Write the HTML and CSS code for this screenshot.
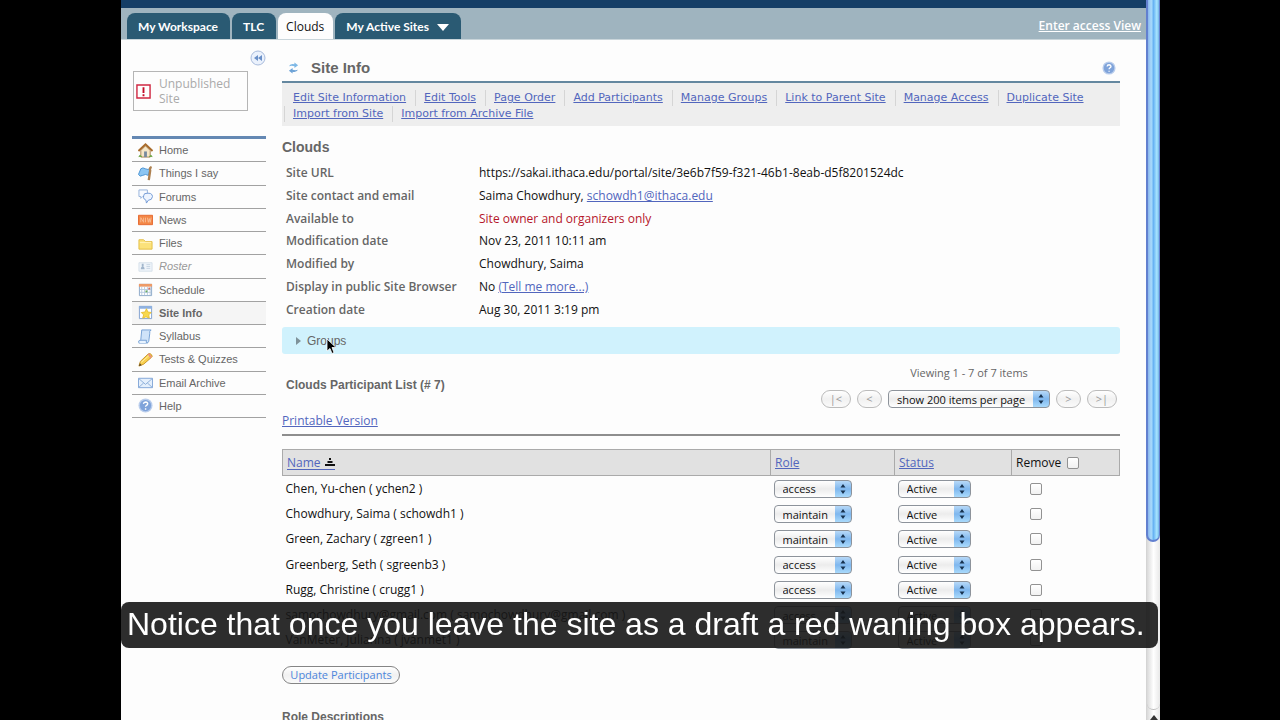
FILE: index.html
```html
<!DOCTYPE html>
<html lang="en">
<head>
<meta charset="utf-8">
<title>Clouds : Site Info</title>
<link rel="stylesheet" href="styles.css">
</head>
<body>
<svg class="sprites" aria-hidden="true">
  <symbol id="updown" viewBox="0 0 8 12"><path d="M4 1 6.500 4.500H1.500zM4 11 6.500 7.500H1.500z" fill="#17324f"/></symbol>
  <symbol id="help" viewBox="0 0 16 16"><circle cx="8" cy="8" r="7.500" fill="#b9cdec"/><circle cx="8" cy="8" r="6" fill="#7fa3da"/><path d="M5.800 6.300Q6 4.300 8.200 4.300 10.300 4.400 10.300 6.200 10.200 7.300 8.900 8 8.100 8.500 8.100 9.400M8.100 11v1.400" fill="none" stroke="#fff" stroke-width="1.500"/></symbol>
</svg>
<div class="window">
  <div class="page">
    <header class="topbar">
      <nav class="tabs">
        <a class="tab" href="#">My Workspace</a>
        <a class="tab" href="#">TLC</a>
        <a class="tab tab-current" href="#">Clouds</a>
        <a class="tab" href="#">My Active Sites <svg class="caret" viewBox="0 0 12 7"><path d="M0 0H12L6 7z" fill="#fff"/></svg></a>
      </nav>
      <a class="view-switch" href="#">Enter access View</a>
    </header>
    <div class="columns">
      <aside class="sidebar">
        <button class="collapse" aria-label="Collapse menu"><svg viewBox="0 0 16 16"><circle cx="8" cy="8" r="7" fill="#eaf1fc" stroke="#a9bcdc"/><path d="M8 5v6L4 8zM12 5v6L8 8z" fill="#6a90c8"/></svg></button>
        <div class="unpublished">
          <svg viewBox="0 0 16 16"><path d="M1 1H15V15H1z" fill="#fff" stroke="#cf2742" stroke-width="1.500"/><path d="M8 3.500v6M8 11v2" stroke="#c40c28" stroke-width="2"/></svg>
          <span>Unpublished Site</span>
        </div>
        <ul class="menu">
          <li><a href="#"><svg viewBox="0 0 16 16"><path d="M3 8V15H13V8L8 3z" fill="#f5e6c6" stroke="#a98252"/><path d="M.500 8.500 8 1.500 15.500 8.500" fill="none" stroke="#a96c2c" stroke-width="2"/><path d="M6.500 9h3v6h-3z" fill="#78899d"/><path d="M1 15q1-4 3 0M12 15q2-4 3 0" fill="#70a84a" stroke="#70a84a"/></svg>Home</a></li>
          <li><a href="#"><svg viewBox="0 0 16 16"><path d="M3 3Q5 1 8 3T13 2L11 10Q8 8 5 10T.500 9z" fill="#8cc6f3" stroke="#4a92d2"/><path d="M14.500 1Q12 2 13 5L11.500 15" fill="none" stroke="#ad8050" stroke-width="2.500"/></svg>Things I say</a></li>
          <li><a href="#"><svg viewBox="0 0 16 16"><path d="M1 1H10V8H5L3 10V8H1z" fill="#f7faff" stroke="#94b2dc"/><path d="M7 5Q15 3 15.500 8 15 12 11 12L9 15 8.500 12Q4 10 7 5z" fill="#edf4ff" stroke="#6f98d4"/></svg>Forums</a></li>
          <li><a href="#"><svg viewBox="0 0 16 16"><path d="M.500 3.500H15.500V13.500H.500z" fill="#f38746" stroke="#e5662e"/><path d="M3 11V6L6 11V6M8 6v5M10 6l1 5 1-4 1 4 1-5" fill="none" stroke="#f9bb93"/></svg>News</a></li>
          <li><a href="#"><svg viewBox="0 0 16 16"><path d="M1 4H6L8 6H15V14H1z" fill="#fbe27b" stroke="#e3bd43"/><path d="M2 7H14" stroke="#fff3b8"/></svg>Files</a></li>
          <li><a class="hidden-tool" href="#"><svg viewBox="0 0 16 16"><path d="M1 4H15V13H1z" fill="#eef4fa" stroke="#d5e0ea"/><path d="M3 11Q3 8 5 8T7 11zM4 5h2v3H4z" fill="#a2b6cc"/><path d="M9 6h4M9 8h4M9 10h4" stroke="#c6d4e2"/></svg>Roster</a></li>
          <li><a href="#"><svg viewBox="0 0 16 16"><path d="M1.500 2.500H14.500V14.500H1.500z" fill="#fff" stroke="#8aa6c6"/><path d="M1 2H15V5H1z" fill="#ee9a66"/><path d="M4 5V14M7 5V14M10 5V14M13 5V14M2 8H14M2 11H14" stroke="#b9cbe0"/><path d="M8 9h2v2H8z" fill="#66a85b"/><path d="M11 6h2v2h-2z" fill="#d76d5b"/></svg>Schedule</a></li>
          <li class="current"><a href="#"><svg viewBox="0 0 16 16"><path d="M1.500 1.500H14.500V14.500H1.500z" fill="#fff" stroke="#7f9fce"/><path d="M1 1H15V4H1z" fill="#8fb1df"/><path d="M9 4 10.500 7.500 14 8 11.500 10.500 12 14 8.500 12.500 5 14 6 10.500 3.500 8 7.500 7.500z" fill="#f8d94d" stroke="#e8bf35"/></svg>Site Info</a></li>
          <li><a href="#"><svg viewBox="0 0 16 16"><path d="M4 1H14Q12 2 12.500 5L11.500 13Q11 15 9 15H1Q3 14 3 11z" fill="#cfe3f9" stroke="#739fd3"/><path d="M1 15Q0 12 2 12H9Q8 15 10 15" fill="#e8f3ff" stroke="#739fd3"/></svg>Syllabus</a></li>
          <li><a href="#"><svg viewBox="0 0 16 16"><path d="M1 15 2.500 10 11 2Q13 1 14.500 3T14 6L6 13z" fill="#f8cf4f" stroke="#c79429"/><path d="M1 15 2 12 4 14z" fill="#584326"/><path d="M11 2 14 6" stroke="#e99081" stroke-width="2"/><path d="M3.500 11 11.500 4" stroke="#fff0a8"/></svg>Tests &amp; Quizzes</a></li>
          <li><a href="#"><svg viewBox="0 0 16 16"><path d="M.500 3.500H15.500V13.500H.500z" fill="#e4effc" stroke="#7fa4d6"/><path d="M1 4 8 10 15 4M1 13 6 8.500M15 13 10 8.500" fill="none" stroke="#8badd9"/></svg>Email Archive</a></li>
          <li><a href="#"><svg><use href="#help"/></svg>Help</a></li>
        </ul>
      </aside>
      <main class="content">
        <div class="title">
          <svg class="refresh" viewBox="0 0 12 14"><path d="M1 5Q3 2 7 3V1L11 4 7 7V5Q4 4 1 5z" fill="#7db8e6"/><path d="M11 9Q9 12 5 11V13L1 10 5 7V9Q8 10 11 9z" fill="#6ca2d6"/></svg>
          <h1>Site Info</h1>
          <a class="help-link" href="#" aria-label="Help"><svg><use href="#help"/></svg></a>
        </div>
        <ul class="actions">
          <li><a href="#">Edit Site Information</a></li>
          <li><a href="#">Edit Tools</a></li>
          <li><a href="#">Page Order</a></li>
          <li><a href="#">Add Participants</a></li>
          <li><a href="#">Manage Groups</a></li>
          <li><a href="#">Link to Parent Site</a></li>
          <li><a href="#">Manage Access</a></li>
          <li><a href="#">Duplicate Site</a></li>
          <li><a href="#">Import from Site</a></li>
          <li><a href="#">Import from Archive File</a></li>
        </ul>
        <h2>Clouds</h2>
        <table class="info">
          <tr><th scope="row">Site URL</th><td>https://sakai.ithaca.edu/portal/site/3e6b7f59-f321-46b1-8eab-d5f8201524dc</td></tr>
          <tr><th scope="row">Site contact and email</th><td>Saima Chowdhury, <a href="#">schowdh1@ithaca.edu</a></td></tr>
          <tr><th scope="row">Available to</th><td class="alert">Site owner and organizers only</td></tr>
          <tr><th scope="row">Modification date</th><td>Nov 23, 2011 10:11 am</td></tr>
          <tr><th scope="row">Modified by</th><td>Chowdhury, Saima</td></tr>
          <tr><th scope="row">Display in public Site Browser</th><td>No <a href="#">(Tell me more...)</a></td></tr>
          <tr><th scope="row">Creation date</th><td>Aug 30, 2011 3:19 pm</td></tr>
        </table>
        <button class="groups"><svg class="disclosure" viewBox="0 0 5 8"><path d="M0 0 5 4 0 8z" fill="#7f9299"/></svg><span>Groups<svg class="pointer" viewBox="0 0 11 17"><path d="M1 1V13L4 10.500 6 15.500 8 14.500 6 9.500H10z" fill="#000" stroke="#fff" stroke-width=".8"/></svg></span></button>
        <div class="list-head">
          <h3>Clouds Participant List (# 7)</h3>
          <div class="pager">
            <p>Viewing 1 - 7 of 7 items</p>
            <div class="pager-row">
              <button class="pill" disabled>|&lt;</button>
              <button class="pill pill-small" disabled>&lt;</button>
              <span class="pick pick-page"><select aria-label="Items per page"><option>show 200 items per page</option></select><svg><use href="#updown"/></svg></span>
              <button class="pill pill-small" disabled>&gt;</button>
              <button class="pill" disabled>&gt;|</button>
            </div>
          </div>
        </div>
        <div class="printable"><a href="#">Printable Version</a></div>
        <table class="people">
          <colgroup><col><col class="col-role"><col class="col-status"><col class="col-remove"></colgroup>
          <thead>
            <tr><th><a class="sorted" href="#">Name <svg viewBox="0 0 10 8"><path d="M4 0h2v2H4zM2.500 3h5v2h-5zM0 6H10V8H0z" fill="#111"/></svg></a></th><th><a href="#">Role</a></th><th><a href="#">Status</a></th><th><label class="remove">Remove <input type="checkbox"></label></th></tr>
          </thead>
          <tbody>
            <tr><td>Chen, Yu-chen ( ychen2 )</td><td><span class="pick pick-role"><select aria-label="Role"><option>access</option><option>maintain</option></select><svg><use href="#updown"/></svg></span></td><td><span class="pick pick-status"><select aria-label="Status"><option>Active</option></select><svg><use href="#updown"/></svg></span></td><td class="check"><input type="checkbox" aria-label="Remove Chen, Yu-chen"></td></tr>
            <tr><td>Chowdhury, Saima ( schowdh1 )</td><td><span class="pick pick-role"><select aria-label="Role"><option>maintain</option><option>access</option></select><svg><use href="#updown"/></svg></span></td><td><span class="pick pick-status"><select aria-label="Status"><option>Active</option></select><svg><use href="#updown"/></svg></span></td><td class="check"><input type="checkbox" aria-label="Remove Chowdhury, Saima"></td></tr>
            <tr><td>Green, Zachary ( zgreen1 )</td><td><span class="pick pick-role"><select aria-label="Role"><option>maintain</option><option>access</option></select><svg><use href="#updown"/></svg></span></td><td><span class="pick pick-status"><select aria-label="Status"><option>Active</option></select><svg><use href="#updown"/></svg></span></td><td class="check"><input type="checkbox" aria-label="Remove Green, Zachary"></td></tr>
            <tr><td>Greenberg, Seth ( sgreenb3 )</td><td><span class="pick pick-role"><select aria-label="Role"><option>access</option><option>maintain</option></select><svg><use href="#updown"/></svg></span></td><td><span class="pick pick-status"><select aria-label="Status"><option>Active</option></select><svg><use href="#updown"/></svg></span></td><td class="check"><input type="checkbox" aria-label="Remove Greenberg, Seth"></td></tr>
            <tr><td>Rugg, Christine ( crugg1 )</td><td><span class="pick pick-role"><select aria-label="Role"><option>access</option><option>maintain</option></select><svg><use href="#updown"/></svg></span></td><td><span class="pick pick-status"><select aria-label="Status"><option>Active</option></select><svg><use href="#updown"/></svg></span></td><td class="check"><input type="checkbox" aria-label="Remove Rugg, Christine"></td></tr>
            <tr><td>samochowdhury@gmail.com ( samochowdhury@gmail.com )</td><td><span class="pick pick-role"><select aria-label="Role"><option>access</option><option>maintain</option></select><svg><use href="#updown"/></svg></span></td><td><span class="pick pick-status"><select aria-label="Status"><option>Active</option></select><svg><use href="#updown"/></svg></span></td><td class="check"><input type="checkbox" aria-label="Remove samochowdhury@gmail.com"></td></tr>
            <tr><td>VanMeter, Julianna ( jvanmet1 )</td><td><span class="pick pick-role"><select aria-label="Role"><option>maintain</option><option>access</option></select><svg><use href="#updown"/></svg></span></td><td><span class="pick pick-status"><select aria-label="Status"><option>Active</option></select><svg><use href="#updown"/></svg></span></td><td class="check"><input type="checkbox" aria-label="Remove VanMeter, Julianna"></td></tr>
          </tbody>
        </table>
        <button class="update">Update Participants</button>
        <h4>Role Descriptions</h4>
      </main>
    </div>
  </div>
  <div class="scrollbar"><div class="thumb"></div><div class="track"></div><div class="scroll-up"><svg viewBox="0 0 8 5"><path d="M4 0 8 5H0z" fill="#333"/></svg></div></div>
</div>
<p class="caption">Notice that once you leave the site as a draft a red waning box appears.</p>
</body>
</html>
```
FILE: styles.css
```css
* { box-sizing: border-box; }
body {
  margin: 0;
  height: 100vh;
  overflow: hidden;
  background: #000;
  color: #111;
  font: 12px/16px "Open Sans", "Noto Sans", sans-serif;
}
h1, h2, h3, h4, p, ul { margin: 0; padding: 0; }
ul { list-style: none; }
button, select, input { font: inherit; margin: 0; }
a { color: #5266bd; }
svg { display: block; flex: none; }
.sprites { position: absolute; width: 0; height: 0; }

.window {
  display: flex;
  height: 100vh;
  margin: 0 120px 0 121px;
  background: #fdfdfd;
}
.page { flex: 1; min-width: 0; overflow: hidden; }

.topbar {
  display: flex;
  align-items: flex-end;
  justify-content: space-between;
  height: 40px;
  padding: 0 5px 0 6px;
  border-top: 8px solid #143e66;
  border-bottom: 1px solid #c9d5da;
  background: #9fb4bf;
}
.tabs { display: flex; gap: 2px; }
.tab {
  display: flex;
  align-items: center;
  gap: 8px;
  height: 26px;
  padding: 6px 12px 4px 11px;
  border-radius: 8px 8px 0 0;
  background: #2a5a73;
  color: #fff;
  font-family: Lato, "Open Sans", sans-serif;
  font-weight: 700;
  text-decoration: none;
}
.tab-current {
  margin-bottom: -1px;
  padding: 6px 9px 4px 8px;
  background: #fdfdfd;
  color: #111;
  font-family: "Open Sans", "Noto Sans", sans-serif;
  font-weight: 400;
}
.caret { width: 12px; height: 7px; }
.view-switch {
  align-self: center;
  color: #fff;
  font-weight: 600;
  padding-top: 4px;
}

.columns { display: flex; }
.sidebar { width: 145px; padding: 10px 0 0 11px; }
.collapse {
  display: block;
  margin-left: auto;
  padding: 0;
  border: 0;
  background: none;
}
.collapse svg { width: 16px; height: 16px; }
.unpublished {
  display: flex;
  align-items: center;
  gap: 8px;
  width: 115px;
  margin: 5px 0 25px 1px;
  padding: 4px 2px;
  border: 1px solid #b5b5b5;
  color: #aaa;
  line-height: 15px;
}
.unpublished svg { width: 15px; height: 15px; }

.menu {
  display: grid;
  grid-auto-rows: 1fr;
  min-height: 282px;
  width: 134px;
  border-top: 3px solid #6488b3;
  font: 11px/14px "Liberation Sans", Arial, sans-serif;
}
.menu li { border-bottom: 1px solid #a2a2a2; display: flex; }
.menu a {
  display: flex;
  align-items: center;
  gap: 6px;
  padding-left: 6px;
  color: #666;
  text-decoration: none;
}
.menu svg { width: 15px; height: 15px; }
.menu .current { background: #f5f5f5; font-weight: 700; }
.menu .hidden-tool { color: #999; font-style: italic; }

.content { flex: 1; min-width: 0; padding: 14px 26px 0 16px; }
.title {
  display: flex;
  align-items: center;
  height: 29px;
  padding: 0 4px 0 6px;
  border-bottom: 2px solid #64879f;
}
h1, h2, h3, h4 { color: #666; font-family: "Liberation Sans", Arial, sans-serif; }
h1 { flex: 1; font-size: 15px; line-height: 20px; }
.refresh { width: 11px; height: 14px; margin-right: 12px; }
.help-link svg { width: 14px; height: 14px; }
.actions {
  display: flex;
  flex-wrap: wrap;
  padding: 7px 16px 4px 2px;
  background: #eee;
  font: 11px/16px "DejaVu Sans", Verdana, sans-serif;
}
.actions li {
  margin: 0 9px 0 0;
  padding-left: 8px;
  border-left: 1px solid #d5d5d5;
}
.actions li:first-child { border-color: transparent; }
h2 { margin: 12px 0 6px; font-size: 14px; line-height: 18px; }

.info {
  height: 159px;
  border-collapse: collapse;
}
.info th {
  width: 193px;
  padding: 0 0 0 4px;
  color: #666;
  font-weight: 600;
  text-align: left;
}
.info td { padding: 0 4px; }
.info .alert { color: #b5162b; }

.groups {
  display: flex;
  align-items: center;
  gap: 6px;
  width: 100%;
  height: 27px;
  margin: 6px 0 11px;
  padding: 0 14px;
  border: 0;
  border-radius: 3px;
  background: #d0f2fd;
  color: #666;
  font: 12px/16px "Liberation Sans", Arial, sans-serif;
}
.groups span { position: relative; }
.disclosure { width: 5px; height: 8px; }
.pointer {
  position: absolute;
  left: 19px;
  top: 5px;
  width: 11px;
  height: 17px;
}

.list-head {
  display: flex;
  justify-content: space-between;
  padding: 0 3px 0 4px;
}
h3 { margin-top: 12px; font-size: 12px; line-height: 16px; }
.pager { color: #666; text-align: center; font-size: 11px; }
.pager-row { display: flex; gap: 6px; margin-top: 9px; }
.pill, .update {
  height: 18px;
  border: 1px solid #bbb;
  border-radius: 9px;
  background: linear-gradient(#fff, #f1f1f1 50%, #fafafa);
  line-height: 14px;
  padding: 0;
}
.pill { width: 30px; color: #999; }
.pill-small { width: 25px; }

.pick { display: inline-grid; align-items: center; vertical-align: middle; }
.pick select {
  grid-area: 1 / 1;
  appearance: none;
  width: 100%;
  height: 18px;
  padding: 0 8px;
  border: 1px solid #8d939b;
  border-radius: 4px;
  background:
    linear-gradient(#b7d9f8, #7fb7ee 50%, #a9dafc) right / 16px 100% no-repeat,
    linear-gradient(#fff, #ececec 50%, #fff);
  color: #111;
  font-size: 11px;
  line-height: 15px;
}
.pick svg {
  grid-area: 1 / 1;
  justify-self: end;
  width: 8px;
  height: 12px;
  margin-right: 5px;
  pointer-events: none;
}
.pick-page { width: 162px; }
.pick-role { width: 78px; }
.pick-status { width: 73px; }

.printable {
  margin-bottom: 13px;
  padding: 5px 0;
  border-bottom: 2px solid #8e8e8e;
}
.people {
  width: 100%;
  table-layout: fixed;
  border-collapse: collapse;
  height: 204px;
}
.col-role { width: 124px; }
.col-status { width: 117px; }
.col-remove { width: 108px; }
.people th {
  height: 26px;
  padding: 0 4px;
  border: 1px solid #aaa;
  background: #e1e1e1;
  font-weight: 400;
  text-align: left;
}
.people td { padding: 0 3px; }
.people td.check { padding-left: 18px; }
.sorted { display: inline-flex; align-items: center; gap: 4px; border-bottom: 1px solid #5266bd; line-height: 13px; text-decoration: none; }
.sorted svg { width: 10px; height: 8px; }
.remove { display: flex; align-items: center; gap: 6px; }
input[type="checkbox"] {
  display: block;
  appearance: none;
  width: 12px;
  height: 12px;
  border: 1px solid #929292;
  border-radius: 2px;
  background: linear-gradient(#fff, #f1f1f1);
}
.update {
  display: block;
  width: 118px;
  margin: 13px 0 24px;
  border-color: #858585;
  color: #4c85dc;
  font-size: 11px;
}
h4 { font-size: 12px; line-height: 18px; }

.scrollbar {
  display: flex;
  flex-direction: column;
  width: 14px;
  border-left: 1px solid #d4d4d4;
  background: linear-gradient(90deg, #d9d9d9, #fff 50%, #e8e8e8);
}
.thumb {
  flex: 3;
  margin-left: -1px;
  border: 1px solid #6280cf;
  border-width: 0 1px 2px 2px;
  border-radius: 0 0 7px 7px;
  background: linear-gradient(90deg, #8ab6ee, #a9dbfb 30%, #68b3f3 50%, #a8e5ff 80%, #72b4e5);
}
.track { flex: 1; min-height: 168px; border-bottom: 1px solid #bbb; border-radius: 0 0 7px 7px; max-height: 168px; }
.scroll-up { height: 10px; padding: 5px 3px 0; }
.scroll-up svg { width: 8px; height: 5px; }

.caption {
  position: fixed;
  left: 121px;
  right: 122px;
  bottom: 72px;
  padding: 4px 6px 6px;
  border-radius: 8px;
  background: rgba(22, 22, 22, .9);
  color: #fff;
  font: 32px/36px "Liberation Sans", Arial, sans-serif;
  white-space: nowrap;
}
```
